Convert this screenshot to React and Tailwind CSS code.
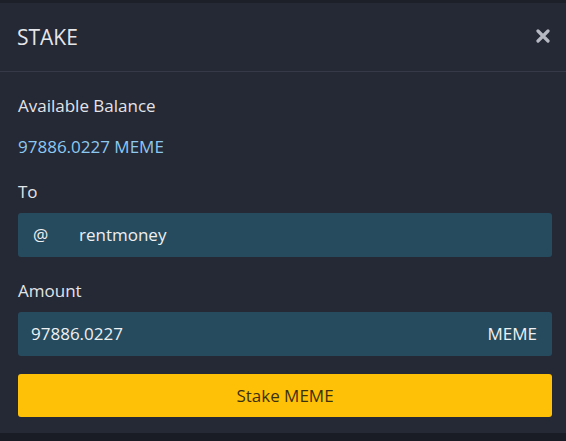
export default function App() {
  return (
    <div className="w-[566px] h-[441px] bg-[#1a1c25] font-['Open_Sans',sans-serif] overflow-hidden">
      <div className="h-[433px] bg-[#252835] border-t-[3px] border-[#1e2029] flex flex-col">
        <div className="h-[69px] pl-[17px] pr-[16px] flex items-center justify-between border-b border-[#363a48]">
          <h1 className="text-[21px] text-[#e4e6ea] leading-none">STAKE</h1>
          <svg width="14" height="14" viewBox="0 0 14 14" className="mb-[2px]">
            <path d="M2 2 L12 12 M12 2 L2 12" stroke="#b6b9c1" strokeWidth="3.2" strokeLinecap="round" />
          </svg>
        </div>
        <div className="pl-[18px] pr-[14px] flex flex-col">
          <p className="mt-[24px] text-[17px] leading-[20px] text-[#e2e4e8]">Available Balance</p>
          <p className="mt-[21px] text-[17px] leading-[20px] text-[#8cc8f0]">97886.0227 MEME</p>
          <p className="mt-[25px] text-[17px] leading-[20px] text-[#e2e4e8]">To</p>
          <div className="mt-[11px] h-[44px] rounded-[3px] bg-[#264b5e] flex items-center pl-[15px] text-[17px] text-[#eef0f2]">
            <span className="w-[46px]">@</span>
            <span>rentmoney</span>
          </div>
          <p className="mt-[24px] text-[17px] leading-[20px] text-[#e2e4e8]">Amount</p>
          <div className="mt-[11px] h-[44px] rounded-[3px] bg-[#264b5e] flex items-center justify-between pl-[13px] pr-[15px] text-[17px] text-[#eef0f2]">
            <span>97886.0227</span>
            <span>MEME</span>
          </div>
          <button className="mt-[18px] h-[43px] rounded-[3px] bg-[#ffc107] text-[17px] text-[#3b3110]">
            Stake MEME
          </button>
        </div>
      </div>
    </div>
  );
}
